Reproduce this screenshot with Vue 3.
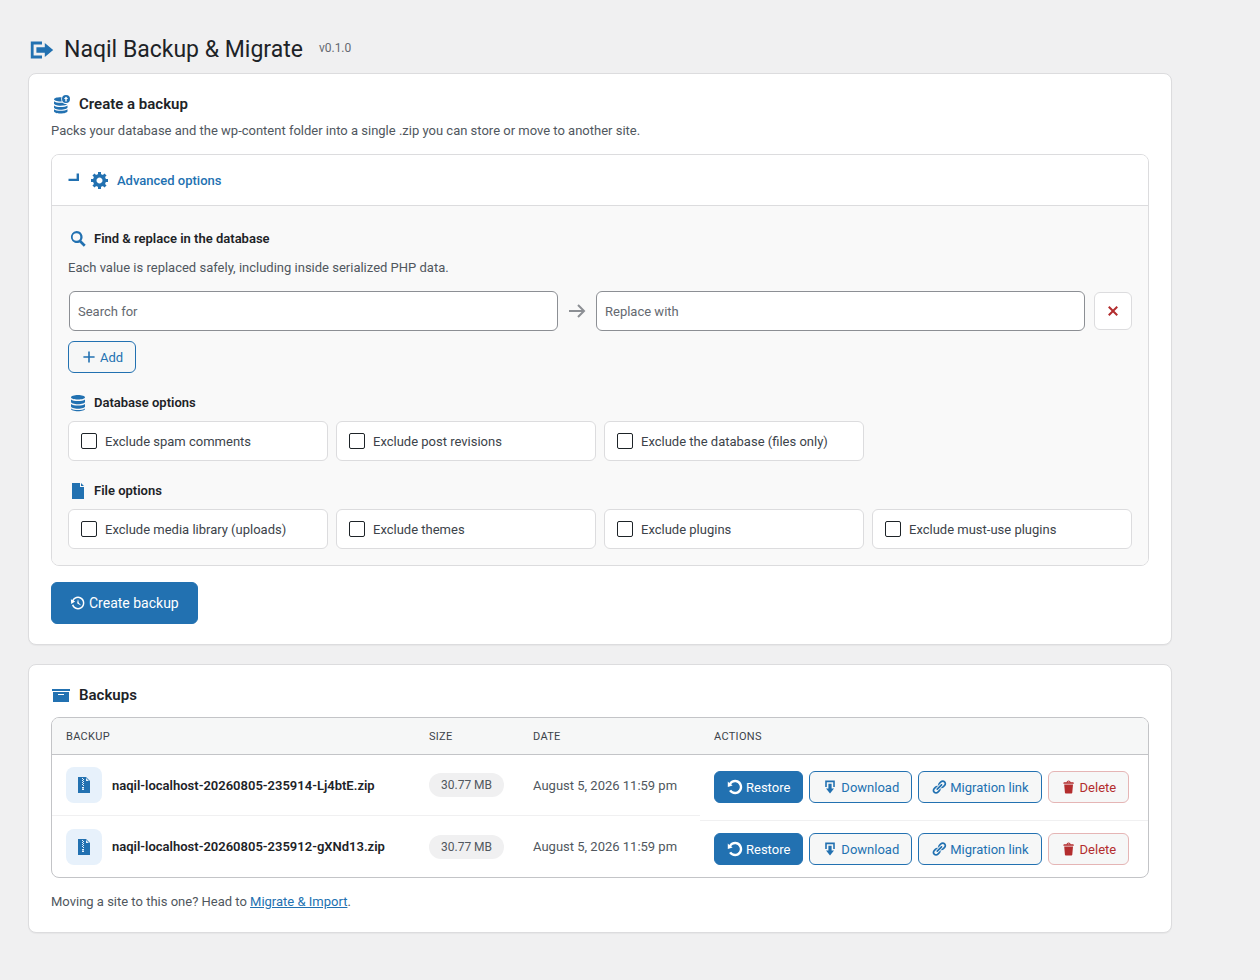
<template>
  <div class="page">
    <header class="page-head">
      <svg class="head-icon" viewBox="0 0 20 20"><path :d="icons.migrate" /></svg>
      <h1>Naqil Backup &amp; Migrate</h1>
      <span class="version">v0.1.0</span>
    </header>

    <section class="card create-card">
      <h2 class="card-title">
        <svg class="ic20" viewBox="0 0 20 20"><path :d="icons.dbExport" fill-rule="evenodd" /></svg>
        Create a backup
      </h2>
      <p class="card-desc">Packs your database and the wp-content folder into a single .zip you can store or move to another site.</p>

      <div class="panel">
        <div class="panel-head">
          <svg class="caret" viewBox="0 0 12 10"><path d="M8.6 0.5H11V8H0.5V5.8H8.6z" /></svg>
          <svg class="ic20" viewBox="0 0 20 20"><path :d="icons.gear" /></svg>
          <span>Advanced options</span>
        </div>
        <div class="panel-body">
          <h3 class="group-title first">
            <svg class="ic20" viewBox="0 0 20 20"><path :d="icons.search" /></svg>
            Find &amp; replace in the database
          </h3>
          <p class="group-desc">Each value is replaced safely, including inside serialized PHP data.</p>
          <div class="replace-row">
            <input class="text-input" type="text" placeholder="Search for" />
            <svg class="arrow" viewBox="0 0 20 20"><path d="M2 10h15M11 4l6 6-6 6" /></svg>
            <input class="text-input" type="text" placeholder="Replace with" />
            <button class="remove-btn" type="button">
              <svg viewBox="0 0 20 20"><path :d="icons.close" /></svg>
            </button>
          </div>
          <button class="btn btn-outline add-btn" type="button">
            <svg viewBox="0 0 20 20"><path :d="icons.plus" /></svg>
            Add
          </button>

          <h3 class="group-title">
            <svg class="ic20" viewBox="0 0 20 20"><path :d="icons.database" /></svg>
            Database options
          </h3>
          <div class="check-grid">
            <label v-for="opt in dbOptions" :key="opt" class="check-item">
              <input type="checkbox" />
              <span>{{ opt }}</span>
            </label>
          </div>

          <h3 class="group-title files">
            <svg class="ic20" viewBox="0 0 20 20"><path :d="icons.file" /></svg>
            File options
          </h3>
          <div class="check-grid">
            <label v-for="opt in fileOptions" :key="opt" class="check-item">
              <input type="checkbox" />
              <span>{{ opt }}</span>
            </label>
          </div>
        </div>
      </div>

      <button class="btn btn-primary create-btn" type="button">
        <svg viewBox="0 0 20 20"><path :d="icons.backup" /></svg>
        Create backup
      </button>
    </section>

    <section class="card backups-card">
      <h2 class="card-title">
        <svg class="ic20" viewBox="0 0 20 20"><path :d="icons.archive" /></svg>
        Backups
      </h2>

      <div class="table">
        <div class="table-head">
          <div>Backup</div>
          <div>Size</div>
          <div>Date</div>
          <div>Actions</div>
        </div>
        <div class="table-body">
          <div class="info-col">
            <div v-for="b in backups" :key="b.name" class="info-row">
              <div class="name-cell">
                <span class="file-badge">
                  <svg viewBox="0 0 20 20"><path :d="icons.zip" fill-rule="evenodd" /></svg>
                </span>
                <strong>{{ b.name }}</strong>
              </div>
              <div><span class="size-pill">{{ b.size }}</span></div>
              <div class="date-cell">{{ b.date }}</div>
            </div>
          </div>
          <div class="actions-col">
            <div v-for="b in backups" :key="b.name" class="actions-row">
              <button class="btn btn-primary small" type="button">
                <svg viewBox="0 0 20 20"><path :d="icons.restore" /></svg>Restore
              </button>
              <button class="btn btn-outline small" type="button">
                <svg viewBox="0 0 20 20"><path :d="icons.download" /></svg>Download
              </button>
              <button class="btn btn-outline small" type="button">
                <svg viewBox="0 0 20 20"><path :d="icons.link" /></svg>Migration link
              </button>
              <button class="btn btn-danger small" type="button">
                <svg viewBox="0 0 20 20"><path :d="icons.trash" /></svg>Delete
              </button>
            </div>
          </div>
        </div>
      </div>

      <p class="foot-note">Moving a site to this one? Head to <a href="#">Migrate &amp; Import</a>.</p>
    </section>
  </div>
</template>

<script setup>
const dbOptions = ['Exclude spam comments', 'Exclude post revisions', 'Exclude the database (files only)']
const fileOptions = ['Exclude media library (uploads)', 'Exclude themes', 'Exclude plugins', 'Exclude must-use plugins']

const backups = [
  { name: 'naqil-localhost-20260805-235914-Lj4btE.zip', size: '30.77 MB', date: 'August 5, 2026 11:59 pm' },
  { name: 'naqil-localhost-20260805-235912-gXNd13.zip', size: '30.77 MB', date: 'August 5, 2026 11:59 pm' }
]

const icons = {
  migrate: 'M4 6h6V4H2v12.01h8V14H4V6zm2 2h6V5l6 5-6 5v-3H6V8z',
  dbExport: 'M15 1a4 4 0 1 1 0 8 4 4 0 0 1 0-8zm0 1.4L12.9 5h1.4v2.5h1.4V5h1.4L15 2.4zM9.5 3.2c.3 0 .7 0 1 0a5.5 5.5 0 0 0 .2 4.2c-.4 0-.8.1-1.2.1C5.9 7.5 3 6.5 3 5.3s2.900-2.100 6.500-2.100zM3 7.300c1.200 1 3.700 1.500 6.500 1.500.7 0 1.400 0 2.100-.1.900.8 2.100 1.300 3.400 1.300.5 0 1 0 1.500-.2-.7 1.200-3.500 2-7 2C5.900 11.800 3 10.800 3 9.600V7.300zM16.500 11.400v2.200c0 1.200-3.100 2.200-7 2.200S3 14.800 3 13.600v-2.200c1.200 1 3.700 1.600 6.500 1.600s5.600-.6 7-1.600zM16.500 15.200v2c0 1.200-3.100 2.300-7 2.300S3 18.400 3 17.200v-2c1.200 1 3.700 1.600 6.500 1.600s5.600-.6 7-1.600z',
  gear: 'M18 12h-2.180c-.17.700-.44 1.350-.81 1.930l1.540 1.540-2.100 2.100-1.540-1.540c-.58.360-1.230.630-1.910.790V19H8v-2.180c-.68-.16-1.330-.43-1.910-.79l-1.540 1.540-2.120-2.120 1.540-1.540c-.36-.58-.63-1.230-.79-1.910H1V9.030h2.170c.16-.7.44-1.350.8-1.940L2.430 5.550l2.100-2.100 1.540 1.540c.58-.37 1.240-.64 1.930-.81V2h3v2.180c.68.160 1.330.430 1.910.790l1.540-1.540 2.120 2.120-1.540 1.540c.36.590.64 1.240.8 1.940H18V12zm-8.500 1.500c1.660 0 3-1.340 3-3s-1.340-3-3-3-3 1.340-3 3 1.340 3 3 3z',
  search: 'M8.500 2a6 6 0 0 1 4.900 9.500l4.300 4.300-1.900 1.900-4.300-4.300A6 6 0 1 1 8.500 2zm0 2.200a3.800 3.800 0 1 0 0 7.600 3.800 3.800 0 0 0 0-7.600z',
  close: 'M14.950 6.460L11.410 10l3.540 3.540-1.410 1.410L10 11.420l-3.530 3.530-1.420-1.420L8.580 10 5.050 6.470l1.420-1.420L10 8.580l3.540-3.530z',
  plus: 'M11 3v6h6v2h-6v6H9v-6H3V9h6V3z',
  database: 'M10 2c3.900 0 7 1 7 2.300S13.900 6.600 10 6.600 3 5.600 3 4.300 6.100 2 10 2zM3 6.400C4.400 7.500 7 8 10 8s5.600-.5 7-1.600V9c0 1.200-3.100 2.200-7 2.200S3 10.200 3 9V6.400zM3 11c1.400 1.100 4 1.600 7 1.600s5.600-.5 7-1.600v2.500c0 1.200-3.100 2.200-7 2.200s-7-1-7-2.200V11zm0 4.400c1.400 1.100 4 1.600 7 1.600s5.600-.5 7-1.600v.6c0 1.200-3.100 2.200-7 2.200s-7-1-7-2.200v-.6z',
  file: 'M4 2h8v4h4v12H4V2zm9 0l3 3h-3V2z',
  backup: 'M13.650 2.880c3.930 2.010 5.480 6.840 3.470 10.770s-6.830 5.480-10.770 3.470c-1.870-.96-3.200-2.560-3.860-4.400l1.640-1.030c.45 1.570 1.520 2.950 3.080 3.760 3.010 1.540 6.690.35 8.230-2.660 1.550-3.010.36-6.690-2.650-8.240C9.780 3.010 6.100 4.200 4.560 7.210l1.880.97-4.950 3.080-.39-5.820 1.780.91C4.900 2.400 9.750.89 13.650 2.880zm-4.360 7.830C9.110 10.530 9 10.280 9 10c0-.07.03-.12.04-.19h-.01L10 5l.97 4.810L14 13l-4.500-2.120.02-.02c-.08-.04-.16-.09-.23-.15z',
  archive: 'M19 4v2H1V4h18zM2 7h16v10H2V7zm11 3V9H7v1h6z',
  zip: 'M12 2l4 4v12H4V2h8zM9 3H8v1h1V3zm1 1H9v1h1V4zM9 5H8v1h1V5zm1 1H9v1h1V6zM9 7H8v1h1V7zm1 1H9v1h1V8zm-1 1H8v1h1V9zm1 1H9v1h1v-1zm0 2H8v3h2v-3zm-.500 1v1h-1v-1h1zM12 3v3h3l-3-3z',
  restore: 'M10.250 1.020c5.100 0 8.750 4.040 8.750 9s-3.650 9-8.750 9c-3.200 0-6.020-1.590-7.680-3.990l2.590-1.520c1.100 1.500 2.860 2.510 4.840 2.510 3.300 0 6-2.790 6-6s-2.700-6-6-6c-1.970 0-3.720 1-4.820 2.490L7 8.020l-6 2v-7L2.890 4.900C4.550 2.500 7.300 1.020 10.250 1.020z',
  download: 'M14.010 4v6h2V2H4v8h2.010V4h8zm-2 2v6h3l-5 6-5-6h3V6h4z',
  link: 'M17.740 2.760c1.680 1.690 1.680 4.410 0 6.100l-1.530 1.520c-1.120 1.120-2.700 1.470-4.140 1.090l2.620-2.610.76-.77.76-.76c.84-.84.84-2.200 0-3.040-.84-.85-2.200-.85-3.040 0l-.77.76-3.380 3.380c-.37-1.440-.02-3.020 1.100-4.140l1.520-1.530c1.690-1.680 4.420-1.680 6.100 0zM8.590 13.430l5.340-5.340c.42-.42.42-1.100 0-1.520-.44-.43-1.130-.39-1.530 0l-5.330 5.340c-.42.42-.42 1.100 0 1.520.44.43 1.130.39 1.520 0zm-.76 2.290l4.140-4.150c.38 1.440.03 3.020-1.090 4.140l-1.520 1.530c-1.690 1.680-4.410 1.680-6.100 0-1.680-1.680-1.680-4.420 0-6.100l1.530-1.520c1.120-1.120 2.700-1.470 4.140-1.100l-4.140 4.150c-.85.84-.85 2.200 0 3.050.84.84 2.200.84 3.040 0z',
  trash: 'M12 4h3c.6 0 1 .4 1 1v1H3V5c0-.6.500-1 1-1h3c.2-1.100 1.300-2 2.500-2s2.300.9 2.500 2zM8 4h3c-.2-.6-.9-1-1.500-1S8.200 3.400 8 4zM4 7h11l-.9 10.100c0 .5-.5.9-1 .9H5.900c-.5 0-.9-.4-1-.9L4 7z'
}
</script>

<style>
html, body {
  background: #f0f0f1;
}
</style>

<style scoped>
.page {
  width: 1144px;
  margin-left: 28px;
  padding-top: 33px;
  padding-bottom: 48px;
  font-family: Roboto, "Noto Sans", sans-serif;
  font-size: 13px;
  color: #1d2327;
}

svg {
  fill: currentColor;
  flex-shrink: 0;
}

.page-head {
  display: flex;
  align-items: center;
  height: 33px;
  margin-bottom: 7px;
}

.head-icon {
  width: 28px;
  height: 28px;
  color: #2271b1;
  margin-right: 8px;
}

h1 {
  margin: 0;
  font-size: 23px;
  font-weight: 400;
  line-height: 1.3;
}

.version {
  margin-left: 16px;
  font-size: 12px;
  color: #646970;
  position: relative;
  top: -2px;
}

.card {
  background: #fff;
  border: 1px solid #dcdcde;
  border-radius: 8px;
  padding: 20px 22px;
  margin-bottom: 19px;
  box-shadow: 0 1px 1px rgba(0, 0, 0, 0.04);
}

.card-title {
  display: flex;
  align-items: center;
  gap: 8px;
  margin: 0;
  font-size: 15px;
  font-weight: 600;
  line-height: 20px;
}

.ic20 {
  width: 20px;
  height: 20px;
  color: #2271b1;
}

.card-desc {
  margin: 7px 0 13px;
  line-height: 20px;
  color: #50575e;
}

.panel {
  border: 1px solid #dcdcde;
  border-radius: 8px;
  overflow: hidden;
}

.panel-head {
  display: flex;
  align-items: center;
  height: 50px;
  padding-left: 16px;
  background: #fff;
  border-bottom: 1px solid #dcdcde;
  color: #2271b1;
  font-weight: 500;
}

.caret {
  width: 12px;
  height: 10px;
  margin-right: 10px;
  margin-top: -4px;
}

.panel-head span {
  margin-left: 7px;
}

.panel-body {
  background: #f9f9f9;
  padding: 16px;
}

.group-title {
  display: flex;
  align-items: center;
  gap: 6px;
  margin: 20px 0 8px;
  font-size: 13px;
  font-weight: 600;
  line-height: 20px;
}

.group-title.first {
  margin-top: 7px;
}

.group-title.files {
  margin-top: 20px;
}

.group-desc {
  margin: 9px 0 13px;
  line-height: 20px;
  color: #50575e;
}

.replace-row {
  display: flex;
  align-items: center;
  margin-left: 1px;
}

.text-input {
  flex: 1;
  min-width: 0;
  height: 40px;
  box-sizing: border-box;
  padding: 0 8px;
  border: 1px solid #8c8f94;
  border-radius: 6px;
  background: #fff;
  font: inherit;
  color: #2c3338;
}

.text-input::placeholder {
  color: #646970;
}

.arrow {
  width: 20px;
  height: 20px;
  margin: 0 9px;
  fill: none;
  stroke: #8c8f94;
  stroke-width: 2;
}

.remove-btn {
  display: flex;
  align-items: center;
  justify-content: center;
  width: 38px;
  height: 38px;
  margin-left: 9px;
  padding: 0;
  border: 1px solid #dcdcde;
  border-radius: 6px;
  background: #fff;
  color: #b32d2e;
}

.remove-btn svg {
  width: 20px;
  height: 20px;
}

.btn {
  display: inline-flex;
  align-items: center;
  box-sizing: border-box;
  font: inherit;
  border-radius: 6px;
  white-space: nowrap;
}

.btn-outline {
  border: 1px solid #2271b1;
  background: #f6f7f7;
  color: #2271b1;
}

.btn-primary {
  border: 1px solid #2271b1;
  background: #2271b1;
  color: #fff;
}

.btn-danger {
  border: 1px solid #e5b5b5;
  background: #f6f7f7;
  color: #b32d2e;
}

.add-btn {
  height: 32px;
  margin-top: 10px;
  padding: 0 12px;
  gap: 3px;
}

.add-btn svg {
  width: 16px;
  height: 16px;
}

.check-grid {
  display: grid;
  grid-template-columns: repeat(4, 1fr);
  gap: 8px;
}

.check-item {
  display: flex;
  align-items: center;
  gap: 8px;
  height: 40px;
  box-sizing: border-box;
  padding: 0 12px;
  background: #fff;
  border: 1px solid #dcdcde;
  border-radius: 6px;
  color: #3c434a;
}

.check-item input {
  appearance: none;
  width: 16px;
  height: 16px;
  margin: 0;
  border: 1px solid #1d2327;
  border-radius: 2px;
  background: #fff;
}

.create-btn {
  height: 42px;
  margin-top: 16px;
  padding: 0 18px;
  gap: 3px;
  font-size: 14px;
}

.create-btn svg {
  width: 16px;
  height: 16px;
}

.backups-card {
  padding-top: 20px;
  padding-bottom: 20px;
}

.table {
  margin-top: 12px;
  border: 1px solid #c3c4c7;
  border-radius: 8px;
  overflow: hidden;
}

.table-head {
  display: grid;
  grid-template-columns: 363px 104px 181px 1fr;
  height: 36px;
  align-items: center;
  background: #f6f7f7;
  border-bottom: 1px solid #c3c4c7;
  font-size: 11px;
  letter-spacing: 0.3px;
  text-transform: uppercase;
  color: #3c434a;
}

.table-head div {
  padding-left: 14px;
}

.table-body {
  display: flex;
}

.info-col {
  width: 648px;
  flex-shrink: 0;
}

.info-row {
  display: grid;
  grid-template-columns: 363px 104px 181px;
  align-items: center;
  height: 61px;
  box-sizing: border-box;
}

.info-row:first-child {
  border-bottom: 1px solid #f0f0f1;
}

.info-row > div {
  padding-left: 14px;
}

.name-cell {
  display: flex;
  align-items: center;
  gap: 10px;
}

.name-cell strong {
  font-weight: 600;
  white-space: nowrap;
}

.file-badge {
  display: flex;
  align-items: center;
  justify-content: center;
  width: 36px;
  height: 36px;
  border-radius: 8px;
  background: #e7f1fb;
  color: #2271b1;
}

.file-badge svg {
  width: 20px;
  height: 20px;
}

.size-pill {
  display: inline-block;
  height: 24px;
  padding: 0 12px;
  border-radius: 12px;
  background: #f0f0f1;
  font-size: 12px;
  line-height: 24px;
  color: #50575e;
}

.date-cell {
  white-space: nowrap;
  color: #50575e;
}

.actions-col {
  flex: 1;
}

.actions-row {
  display: flex;
  gap: 6px;
  padding: 16px 14px 17px;
}

.actions-row:first-child {
  border-bottom: 1px solid #f0f0f1;
}

.actions-row:last-child {
  padding-top: 12px;
  padding-bottom: 12px;
}

.small {
  height: 32px;
  padding: 0 12px;
  gap: 3px;
}

.small svg {
  width: 16px;
  height: 16px;
}

.foot-note {
  margin: 14px 0 0;
  line-height: 20px;
  color: #50575e;
}

.foot-note a {
  color: #2271b1;
}
</style>
